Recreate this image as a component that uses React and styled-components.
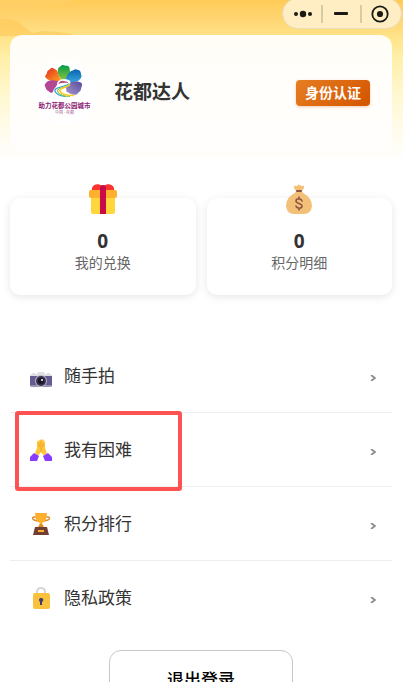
import React from "react";
import styled, { createGlobalStyle } from "styled-components";

const GlobalStyle = createGlobalStyle`
  * {
    box-sizing: border-box;
  }
  body {
    margin: 0;
    background: #fff;
    color: #333;
    font-family: "Noto Sans", "Noto Sans CJK SC", sans-serif;
  }
  button {
    font-family: inherit;
    cursor: pointer;
  }
`;

const Page = styled.div`
  position: relative;
  height: 100vh;
  overflow-y: auto;
  scrollbar-width: none;
`;
const Header = styled.header`
  position: relative;
  padding: 35px 11px 6px 10px;
  background: linear-gradient(
    #ffcb57 0,
    #ffd471 18px,
    #ffe48b 38px,
    #fff0ac 60px,
    #fff8d4 100px,
    #fffdf5 145px,
    #fffefa 156px
  );
`;
const Hills = styled.svg`
  position: absolute;
  top: 0;
  left: 0;
`;
const Capsule = styled.div`
  position: absolute;
  top: -2px;
  right: 1px;
  display: flex;
  align-items: center;
  width: 120px;
  height: 31px;
  padding-right: 3px;
  border: 1px solid #e9dcb9;
  border-radius: 16px;
  background: #ffedc4;
`;
const CapsuleButton = styled.button`
  flex: 1;
  display: flex;
  justify-content: center;
  align-items: center;
  height: 18px;
  padding: 0;
  border: none;
  border-left: ${(props) => (props.$divided ? "2px solid #d8caa5" : "2px solid transparent")};
  background: none;
`;
const Profile = styled.section`
  position: relative;
  display: flex;
  align-items: center;
  height: 116px;
  padding: 0 22px;
  border-radius: 12px;
  background: linear-gradient(#fffdf5, #fffefb 40%, #fffefc);
`;
const Avatar = styled.svg`
  border-radius: 50%;
  background: #fff;
`;
const Name = styled.h1`
  flex: 1;
  margin: 0 0 2px 18px;
  font-size: 19px;
  line-height: 28px;
  font-weight: 700;
`;
const Verify = styled.button`
  width: 74px;
  height: 26px;
  padding: 0;
  border: none;
  border-radius: 4px;
  background: linear-gradient(135deg, #e67e22, #d35400);
  box-shadow: 0 1px 3px rgba(211, 84, 0, 0.3);
  color: #fff;
  font-size: 14px;
  line-height: 26px;
  font-weight: 700;
`;
const Stats = styled.section`
  display: grid;
  grid-template-columns: 1fr 1fr;
  gap: 11px;
  padding: 41px 11px 0 10px;
`;
const Stat = styled.a`
  position: relative;
  display: flex;
  flex-direction: column;
  align-items: center;
  height: 97px;
  padding-top: 31px;
  border-radius: 10px;
  background: #fff;
  box-shadow: 0 2px 8px rgba(0, 0, 0, 0.1);
  color: #666;
  text-decoration: none;
`;
const StatIcon = styled.svg`
  position: absolute;
  top: -15px;
  left: 50%;
  margin-left: -16px;
`;
const StatValue = styled.strong`
  color: #333;
  font-size: 19px;
  line-height: 24px;
`;
const StatLabel = styled.span`
  font-size: 14px;
  line-height: 20px;
`;
const Menu = styled.nav`
  padding: 44px 11px 0 10px;
`;
const MenuItem = styled.a`
  position: relative;
  display: flex;
  align-items: center;
  height: 74px;
  padding: 0 16px 0 20px;
  border-bottom: 1px solid ${(props) => (props.$last ? "transparent" : "#eee")};
  color: #333;
  text-decoration: none;
`;
const MenuLabel = styled.span`
  flex: 1;
  margin-left: 12px;
  font-size: 17px;
  line-height: 24px;
`;
const MenuIcon = styled.svg`
  margin-top: 1px;
`;
const Arrow = styled.svg`
  margin-top: 5px;
`;
const Highlight = styled.span`
  position: absolute;
  top: -2px;
  left: 5px;
  width: 167px;
  height: 80px;
  border: 4px solid #ff5252;
  border-radius: 3px;
  pointer-events: none;
  z-index: 1;
`;
const Footer = styled.footer`
  display: flex;
  justify-content: center;
  padding: 15px 11px 20px 10px;
`;
const Logout = styled.button`
  width: 184px;
  height: 60px;
  border: 1px solid #c8c8c8;
  border-radius: 12px;
  background: #fff;
  color: #000;
  font-size: 17px;
  line-height: 24px;
  font-weight: 500;
`;

const FlowerLogo = () => (
  <Avatar width="64" height="64" viewBox="0 0 128 128" role="img" aria-label="花都">
    <defs>
      <linearGradient id="red" x1="0" y1="0" x2="1" y2="1">
        <stop offset="0" stopColor="#e52b20" />
        <stop offset="1" stopColor="#ffad22" />
      </linearGradient>
      <linearGradient id="green" x1="0" y1="0" x2="0" y2="1">
        <stop offset="0" stopColor="#009b4d" />
        <stop offset="1" stopColor="#9acb37" />
      </linearGradient>
      <linearGradient id="blue" x1="0" y1="0" x2="0" y2="1">
        <stop offset="0" stopColor="#0864ae" />
        <stop offset="1" stopColor="#3aa6db" />
      </linearGradient>
      <linearGradient id="violet" x1="1" y1="0" x2="0" y2="1">
        <stop offset="0" stopColor="#554a9f" />
        <stop offset="1" stopColor="#a998cb" />
      </linearGradient>
    </defs>
    <g transform="translate(63 43) scale(1 0.9)">
      <path d="M-2 -2C-17 1 -33 -5 -37 -13C-36 -17 -33 -18 -33 -22C-32 -28 -28 -27 -26 -31C-23 -35 -18 -30 -16 -29C-9 -26 -10 -9 -2 -2Z" fill="url(#red)" />
      <path d="M0 -2C-7 -9 -13 -19 -11 -30C-10 -35 -6 -35 -4 -38C0 -41 3 -37 6 -37C12 -37 12 -32 13 -26C13 -17 6 -9 0 -2Z" fill="url(#green)" />
      <path d="M2 -2C6 -11 9 -26 20 -27C24 -32 28 -27 31 -27C36 -24 34 -19 36 -16C37 -11 33 -7 30 -4C21 1 10 1 2 -2Z" fill="url(#blue)" />
      <path d="M-4 0C-18 -7 -31 -7 -36 2C-40 7 -35 10 -35 13C-34 19 -30 18 -27 22C-23 25 -19 20 -16 16C-12 10 -7 6 -4 0Z" fill="#b44794" />
      <path d="M4 2C14 -2 29 -4 36 1C39 7 35 10 35 15C34 20 30 21 27 26C21 29 13 26 6 20Z" fill="url(#violet)" />
      <path d="M-13 1C-9 -8 2 -10 9 -6C17 -3 14 5 8 8C-1 12 -4 15 -1 21C3 28 14 28 26 28L20 34C3 37 -15 33 -20 24C-24 14 -10 8 -13 1Z" fill="#fff" />
      <path d="M-10 1Q-5 -6 3 -3Q9 -3 9 1Q0 -1 -10 3Z" fill="#b4527c" />
      <g fill="none" strokeLinecap="round">
        <path d="M11 3C7 9 -20 10 -17 19C-15 26 -5 30 3 31" stroke="#279fd7" strokeWidth="2.5" />
        <path d="M12 4C7 11 -14 11 -12 19C-10 26 2 31 12 31" stroke="#88c852" strokeWidth="2.5" />
        <path d="M12 5C6 12 -9 12 -7 19C-5 26 8 29 20 29" stroke="#f7cc23" strokeWidth="3.5" />
      </g>
    </g>
    <text x="65" y="93" textAnchor="middle" fontSize="13" fontWeight="700" fill="#8d2273">助力花都公园城市</text>
    <text x="65" y="106" textAnchor="middle" fontSize="8" fill="#a66796">中国 · 花都</text>
  </Avatar>
);

const GiftIcon = () => (
  <StatIcon width="32" height="32" viewBox="0 0 32 32">
    <path d="M15 3C12 0 6 1 5 5C4 9 9 10 15 9M17 3C20 0 26 1 27 5C28 9 23 10 17 9" fill="#fc342f" />
    <path d="M4 13H28V29Q28 31 26 31H6Q4 31 4 29Z" fill="#ffd63b" />
    <rect x="2" y="7" width="28" height="8" rx="2" fill="#ffb02e" />
    <path d="M13 4Q13 2 16 2Q19 2 19 4V31H13Z" fill="#ca0b4a" />
  </StatIcon>
);

const MoneyIcon = () => (
  <StatIcon width="32" height="32" viewBox="0 0 32 32">
    <path d="M13 8L11 5Q10 2 13 3L14 3Q16 0 18 3L19 3Q22 2 21 5L19 8L20 10Q29 15 29 23Q28 31 21 31H11Q4 31 3 23Q3 14 12 10Z" fill="#f3c078" />
    <rect x="13" y="7" width="6" height="2" rx="1" fill="#8c5543" />
    <path d="M19 18C18 15 13 15 13 18C13 21 19 20 19 23C19 26 14 26 13 23M16 14V16M16 25V27" fill="none" stroke="#8c5543" strokeWidth="1.6" strokeLinecap="round" />
  </StatIcon>
);

const CameraIcon = () => (
  <MenuIcon width="22" height="22" viewBox="0 -4 22 22">
    <path d="M0 7Q0 5 2 5V4H5V5H7L8 3H14L15 5H17V4H20V5Q22 5 22 7V9H0Z" fill="#e0dfe3" />
    <path d="M0 7H22V16Q22 18 20 18H2Q0 18 0 16Z" fill="#655a91" />
    <path d="M1 17H21" stroke="#cdcad5" />
    <circle cx="11" cy="12" r="6" fill="#bdb7c8" />
    <circle cx="11" cy="12" r="5" fill="#37304b" />
    <circle cx="11" cy="12" r="3" fill="#191429" />
    <circle cx="12" cy="11" r="1" fill="#fff" />
  </MenuIcon>
);

const HandsIcon = () => (
  <MenuIcon width="22" height="22" viewBox="0 0 22 22">
    <path d="M5 14L7 9V3Q8 1 9 2Q10 -1 11 1Q13 -1 14 2Q15 2 15 4L15 9L17 14L14 17L11 13L8 17Z" fill="#ffc53b" />
    <path d="M11 2V13M9 4V8M13 4V8" stroke="#f09b24" fill="none" strokeWidth="0.8" />
    <path d="M0 18L4 14L9 17L7 22H0ZM22 18L18 14L13 17L15 22H22Z" fill="#873cff" />
  </MenuIcon>
);

const TrophyIcon = () => (
  <MenuIcon width="22" height="22" viewBox="0 0 22 22">
    <path d="M6 4H4Q1 5 4 7L8 8M16 4H18Q21 5 18 7L14 8" fill="none" stroke="#dc8c2b" strokeWidth="1.4" />
    <path d="M5 0H17Q17 8 12 10L14 14H8L10 10Q5 8 5 0Z" fill="#ffb02e" />
    <path d="M10 11H12L14 15H8Z" fill="#dd8a25" />
    <path d="M5 14H17L19 22H3Z" fill="#703e32" />
    <rect x="8" y="17" width="6" height="2" fill="#ffb02e" />
  </MenuIcon>
);

const LockIcon = () => (
  <MenuIcon width="22" height="22" viewBox="0 0 22 22">
    <path d="M7 8V5Q7 1 11 1Q15 1 15 5V8" fill="none" stroke="#d6d5d8" strokeWidth="2" />
    <rect x="3" y="6" width="17" height="16" rx="2" fill="#f9c23c" />
    <path d="M11 11Q14 11 13 14L12 15V18H10V15Q8 13 10 11Z" fill="#433b6b" />
  </MenuIcon>
);

const stats = [
  { label: "我的兑换", value: 0, Icon: GiftIcon },
  { label: "积分明细", value: 0, Icon: MoneyIcon },
];

const items = [
  { label: "随手拍", Icon: CameraIcon },
  { label: "我有困难", Icon: HandsIcon, highlighted: true },
  { label: "积分排行", Icon: TrophyIcon },
  { label: "隐私政策", Icon: LockIcon },
];

const App = () => {
  return (
    <Page>
      <GlobalStyle />
      <Header>
        <Hills width="240" height="36" viewBox="0 0 240 36">
          <path d="M0 19Q13 18 20 23L32 33L42 31L58 32L72 34V36H0Z" fill="#ffcb5c" opacity="0.7" />
          <path d="M0 0H75L60 4L42 6L22 10L0 12Z" fill="#ffd16a" opacity="0.6" />
        </Hills>
        <Capsule>
          <CapsuleButton aria-label="更多">
            <svg width="20" height="8" viewBox="0 0 20 8" fill="#1b1b16">
              <circle cx="3" cy="4" r="2" />
              <circle cx="10" cy="4" r="3.2" />
              <circle cx="17" cy="4" r="2" />
            </svg>
          </CapsuleButton>
          <CapsuleButton $divided aria-label="最小化">
            <svg width="14" height="4" viewBox="0 0 14 4">
              <rect width="14" height="3" rx="1" fill="#1b1b16" />
            </svg>
          </CapsuleButton>
          <CapsuleButton $divided aria-label="关闭">
            <svg width="18" height="18" viewBox="0 0 18 18">
              <circle cx="9" cy="9" r="7.7" fill="none" stroke="#1b1b16" strokeWidth="1.8" />
              <circle cx="9" cy="9" r="3.1" fill="#1b1b16" />
            </svg>
          </CapsuleButton>
        </Capsule>
        <Profile>
          <FlowerLogo />
          <Name>花都达人</Name>
          <Verify>身份认证</Verify>
        </Profile>
      </Header>
      <Stats>
        {stats.map(({ label, value, Icon }) => (
          <Stat href="#" key={label}>
            <Icon />
            <StatValue>{value}</StatValue>
            <StatLabel>{label}</StatLabel>
          </Stat>
        ))}
      </Stats>
      <Menu>
        {items.map(({ label, Icon, highlighted }, index) => (
          <MenuItem href="#" key={label} $last={index === items.length - 1}>
            <Icon />
            <MenuLabel>{label}</MenuLabel>
            <Arrow width="6" height="6" viewBox="0 0 6 6">
              <path d="M1 0L5 3L1 6" fill="none" stroke="#888" strokeWidth="1.7" />
            </Arrow>
            {highlighted && <Highlight />}
          </MenuItem>
        ))}
      </Menu>
      <Footer>
        <Logout>退出登录</Logout>
      </Footer>
    </Page>
  );
};

export default App;
